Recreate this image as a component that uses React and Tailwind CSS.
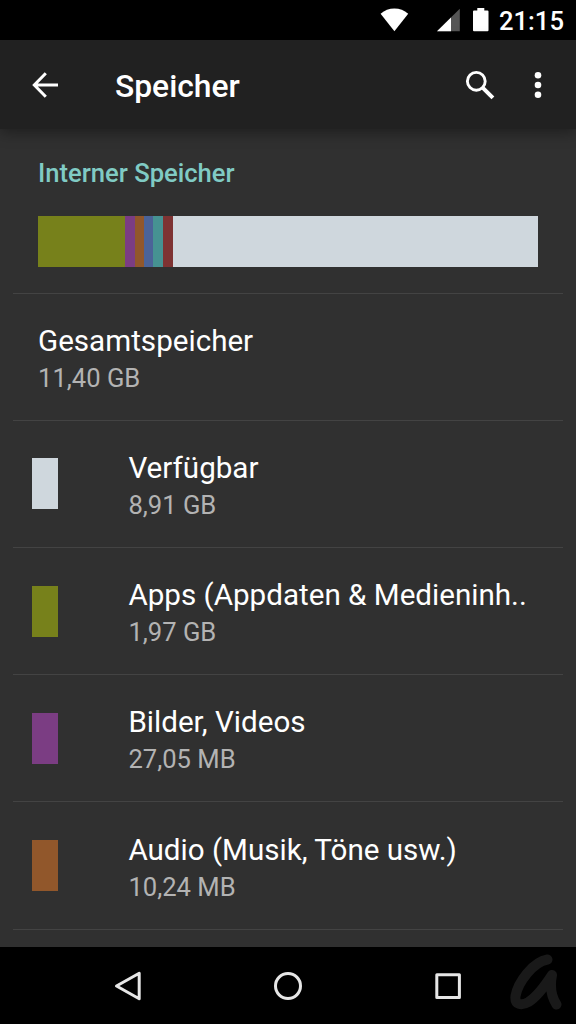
const segments = [
  { id: "apps", className: "w-[87px] bg-[#77811b]" },
  { id: "images", className: "w-[10px] bg-[#7b3d83]" },
  { id: "audio", className: "w-[9px] bg-[#91572b]" },
  { id: "downloads", className: "w-[9px] bg-[#4b6398]" },
  { id: "cache", className: "w-[10px] bg-[#469292]" },
  { id: "misc", className: "w-[10px] bg-[#7e3333]" },
  { id: "free", className: "flex-1 bg-[#cfd7dd]" },
];

const rows = [
  { title: "Gesamtspeicher", size: "11,40 GB" },
  { title: "Verfügbar", size: "8,91 GB", color: "bg-[#cfd7dd]" },
  { title: "Apps (Appdaten & Medieninh..", size: "1,97 GB", color: "bg-[#77811b]" },
  { title: "Bilder, Videos", size: "27,05 MB", color: "bg-[#7b3d83]" },
  { title: "Audio (Musik, Töne usw.)", size: "10,24 MB", color: "bg-[#91572b]" },
];

function StatusBar() {
  return (
    <div className="h-10 bg-black flex items-center shrink-0 pl-[380px]">
      <svg width="29" height="40" viewBox="0 0 29 40" fill="#fff">
        <path d="M0.6 13.8C4.6 10.300 9.200 8.500 14.400 8.500s9.800 1.800 13.800 5.300L14.400 31.200z" />
      </svg>
      <svg className="ml-7" width="23" height="40" viewBox="0 0 23 40">
        <path d="M22.800 8.800V31.300H0z" fill="#555" />
        <path d="M14 17.500V31.300H0z" fill="#fff" />
      </svg>
      <svg className="ml-3" width="18" height="40" viewBox="0 0 18 40" fill="#fff">
        <path d="M5.300 8h7v2.500h3.200a1 1 0 0 1 1 1v18.700a1 1 0 0 1-1 1H2a1 1 0 0 1-1-1V11.500a1 1 0 0 1 1-1h3.300z" />
      </svg>
      <span className="ml-[9px] mt-px text-[25.600px] leading-10 font-medium">21:15</span>
    </div>
  );
}

function Toolbar() {
  return (
    <header className="relative h-[89px] bg-[#212121] flex items-center shrink-0 shadow-[0_3px_14px_rgba(0,0,0,0.4)]">
      <svg className="ml-[31px]" width="28" height="28" viewBox="0 0 28 28" fill="none" stroke="#fff" strokeWidth="3">
        <path d="M14.800 2.200L3.300 14l11.500 11.800M2.500 14H27" />
      </svg>
      <h1 className="ml-[56px] mt-[3px] text-[31.800px] leading-10 font-medium">Speicher</h1>
      <svg className="ml-auto" width="30" height="30" viewBox="0 0 30 30" fill="none" stroke="#fff">
        <circle cx="11.300" cy="11.300" r="8.900" strokeWidth="2.900" />
        <path d="M17.600 17.600l10.300 10.300" strokeWidth="4" />
      </svg>
      <svg className="ml-[39px] mr-[34px]" width="8" height="28" viewBox="0 0 8 28" fill="#fff">
        <circle cx="4" cy="4.300" r="3.300" />
        <circle cx="4" cy="14" r="3.300" />
        <circle cx="4" cy="23.700" r="3.300" />
      </svg>
    </header>
  );
}

function Row({ title, size, color }) {
  return (
    <li className="mx-[13px] h-[127.200px] border-b border-[#434343] flex items-center">
      {color && <div className={`ml-[19.400px] h-[51px] w-[26px] ${color}`} />}
      <div className={color ? "ml-[70px]" : "ml-[25px]"}>
        <div className="mt-[5px] text-[29.600px] leading-[39px] whitespace-nowrap">{title}</div>
        <div className="text-[25.600px] leading-[35.600px] text-[#b3b3b3]">{size}</div>
      </div>
    </li>
  );
}

function NavBar() {
  return (
    <nav className="h-[77px] bg-black flex items-center shrink-0">
      <svg className="ml-[113px]" width="30" height="32" viewBox="0 0 30 32" fill="none" stroke="#e6e6e6" strokeWidth="3" strokeLinejoin="round">
        <path d="M26.200 3.200V28.800L3.500 16z" />
      </svg>
      <svg className="ml-[130px]" width="30" height="30" viewBox="0 0 30 30" fill="none" stroke="#e6e6e6" strokeWidth="3">
        <circle cx="15" cy="15" r="12.500" />
      </svg>
      <svg className="ml-[130px]" width="30" height="30" viewBox="0 0 30 30" fill="none" stroke="#e6e6e6" strokeWidth="3" strokeLinejoin="round">
        <rect x="3.800" y="3.800" width="22.600" height="22.600" />
      </svg>
      <svg className="ml-[44px]" width="58" height="64" viewBox="0 0 58 64" fill="none" stroke="#191919" strokeWidth="10" strokeLinecap="round" strokeLinejoin="round">
        <path d="M40.500 5.500C26 8 11 28 8.500 42c-1 9 6 10 13 6 8-5 17-17 23.500-27-2 10-1 21 4.500 29.500" />
      </svg>
    </nav>
  );
}

export default function App() {
  return (
    <div className="h-[1024px] w-[576px] flex flex-col overflow-hidden bg-[#303030] text-white font-['Roboto',sans-serif]">
      <StatusBar />
      <Toolbar />
      <main className="flex-1 min-h-0 overflow-hidden">
        <section className="mx-[13px] h-[164.600px] border-b border-[#434343] px-[25px] pt-[26px]">
          <h2 className="text-[25.600px] leading-9 font-medium text-[#80cbc4]">Interner Speicher</h2>
          <div className="mt-[25px] flex h-[51px]">
            {segments.map((s) => (
              <div key={s.id} className={s.className} />
            ))}
          </div>
        </section>
        <ul>
          {rows.map((r) => (
            <Row key={r.title} {...r} />
          ))}
        </ul>
      </main>
      <NavBar />
    </div>
  );
}
